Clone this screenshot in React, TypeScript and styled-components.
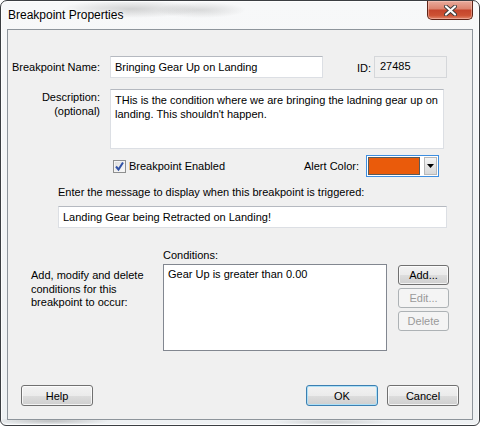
import styled, { createGlobalStyle } from 'styled-components'

const uiFont = `'Liberation Sans', Arial, sans-serif`

const GlobalStyle = createGlobalStyle`
	html, body {
		margin: 0;
		padding: 0;
		background: #ffffff;
	}
	body {
		width: 480px;
		height: 426px;
		overflow: hidden;
		font-family: ${uiFont};
		font-size: 11px;
		color: #000;
	}
`

export default function App() {
	return (
		<>
			<GlobalStyle />
			<Window>
				<TitleBar>
					<Title>Breakpoint Properties</Title>
					<CloseButton>
						<svg width='13' height='11' viewBox='0 0 13 11'>
							<path d='M2 1.5 L11 9.5 M11 1.5 L2 9.5' stroke='#3b3b3b' strokeWidth='4' strokeLinecap='round' />
							<path d='M2 1.5 L11 9.5 M11 1.5 L2 9.5' stroke='#ffffff' strokeWidth='2.2' strokeLinecap='round' />
						</svg>
					</CloseButton>
				</TitleBar>
				<Client>
					<Row>
						<FieldLabel>Breakpoint Name:</FieldLabel>
						<TextBox $width={213}>Bringing Gear Up on Landing</TextBox>
						<IdLabel>ID:</IdLabel>
						<IdBox>27485</IdBox>
					</Row>
					<Row $top={11} $align='flex-start'>
						<FieldLabel $multi>
							Description:
							<br />
							(optional)
						</FieldLabel>
						<TextArea>
							THis is the condition where we are bringing the ladning gear up on
							<br />
							landing. This shouldn't happen.
						</TextArea>
					</Row>
					<Row $top={6}>
						<CheckWrap>
							<CheckBox>
								<svg width='11' height='11' viewBox='0 0 11 11'>
									<path d='M2 5.5 L4.5 8.5 L9 1.5' fill='none' stroke='#3152a6' strokeWidth='2' />
								</svg>
							</CheckBox>
							Breakpoint Enabled
						</CheckWrap>
						<AlertLabel>Alert Color:</AlertLabel>
						<ColorCombo>
							<Swatch $color='#ea5b0b' />
							<DropButton>
								<svg width='7' height='4' viewBox='0 0 7 4'>
									<polygon points='0,0 7,0 3.5,4' fill='#000' />
								</svg>
							</DropButton>
						</ColorCombo>
					</Row>
					<Prompt>Enter the message to display when this breakpoint is triggered:</Prompt>
					<MessageBox>Landing Gear being Retracted on Landing!</MessageBox>
					<Conditions>
						<CondTitle>Conditions:</CondTitle>
						<CondHelp>
							Add, modify and delete
							<br />
							conditions for this
							<br />
							breakpoint to occur:
						</CondHelp>
						<CondList>Gear Up is greater than 0.00</CondList>
						<SideButtons>
							<Button $w={51} $h={20}>Add...</Button>
							<Button $w={51} $h={20} disabled>
								Edit...
							</Button>
							<Button $w={51} $h={20} disabled>
								Delete
							</Button>
						</SideButtons>
					</Conditions>
					<Footer>
						<Button>Help</Button>
						<Spacer />
						<Button $default>OK</Button>
						<Button>Cancel</Button>
					</Footer>
				</Client>
			</Window>
		</>
	)
}

const Window = styled.div`
	box-sizing: border-box;
	width: 480px;
	height: 426px;
	border: 1px solid #3b3e42;
	border-radius: 7px 7px 6px 6px;
	padding: 0 6px 5px 6px;
	display: flex;
	flex-direction: column;
	background:
		radial-gradient(ellipse 70px 9px at 130px 8px, rgba(110, 110, 110, 0.28), transparent),
		radial-gradient(ellipse 45px 8px at 200px 9px, rgba(110, 110, 110, 0.22), transparent),
		radial-gradient(ellipse 60px 4px at 50px 420px, rgba(100, 100, 100, 0.35), transparent),
		radial-gradient(ellipse 60px 3px at 330px 421px, rgba(100, 100, 100, 0.25), transparent),
		linear-gradient(#f7f8f9, #eef1f3);
	box-shadow: inset 0 0 0 1px rgba(255, 255, 255, 0.8);
`
const TitleBar = styled.div`
	height: 28px;
	display: flex;
	align-items: center;
	justify-content: space-between;
`
const Title = styled.div`
	padding-left: 1px;
	font-size: 12px;
	color: #000;
	text-shadow: 0 0 6px #ffffff, 0 0 3px #ffffff;
`
const CloseButton = styled.div`
	align-self: flex-start;
	box-sizing: border-box;
	width: 46px;
	height: 19px;
	border: 1px solid #5e2418;
	border-top: none;
	border-radius: 0 0 5px 5px;
	display: flex;
	align-items: center;
	justify-content: center;
	background: linear-gradient(#e9ab9c 0%, #dd8570 42%, #c5452c 52%, #cd5234 80%, #e2866b 100%);
	box-shadow: inset 0 0 0 1px rgba(255, 210, 200, 0.45);
`
const Client = styled.div`
	flex: 1;
	box-sizing: border-box;
	border: 1px solid #8d949b;
	background: #f0f0f0;
	padding-top: 26px;
	display: flex;
	flex-direction: column;
`
const Row = styled.div<{ $top?: number; $align?: string }>`
	display: flex;
	align-items: ${(p) => p.$align || 'center'};
	margin-top: ${(p) => p.$top || 0}px;
	padding-right: 25px;
`
const FieldLabel = styled.div<{ $multi?: boolean }>`
	width: 92px;
	margin-right: 10px;
	text-align: right;
	line-height: 14px;
	white-space: nowrap;
	padding-top: ${(p) => (p.$multi ? '1px' : '0')};
	flex-shrink: 0;
`
const TextBox = styled.div<{ $width: number }>`
	box-sizing: border-box;
	width: ${(p) => p.$width}px;
	height: 22px;
	padding: 0 4px;
	line-height: 20px;
	background: #ffffff;
	border: 1px solid #dcdfe4;
	border-top-color: #b5b9c0;
	white-space: nowrap;
`
const IdLabel = styled.div`
	flex: 1;
	text-align: right;
	padding-right: 3px;
	padding-top: 2px;
`
const IdBox = styled.div`
	box-sizing: border-box;
	width: 73px;
	height: 22px;
	padding: 0 5px;
	line-height: 18px;
	background: #f0f0f0;
	border: 1px solid #d5d7da;
`
const TextArea = styled.div`
	box-sizing: border-box;
	width: 334px;
	height: 60px;
	padding: 3px 4px;
	line-height: 14px;
	background: #ffffff;
	border: 1px solid #dcdfe4;
	border-top-color: #b5b9c0;
	white-space: nowrap;
`
const CheckWrap = styled.label`
	display: flex;
	align-items: center;
	gap: 3px;
	margin-left: 105px;
`
const CheckBox = styled.span`
	box-sizing: border-box;
	width: 13px;
	height: 13px;
	border: 1px solid #8e8f8f;
	background: linear-gradient(135deg, #dcdcdc, #fbfbfb);
	box-shadow: inset 0 0 0 1px #f4f4f4;
	display: flex;
	align-items: center;
	justify-content: center;
`
const AlertLabel = styled.div`
	flex: 1;
	text-align: right;
	margin-right: 7px;
`
const ColorCombo = styled.div`
	box-sizing: border-box;
	width: 73px;
	height: 22px;
	margin-right: 8px;
	border: 1px solid #3d8ee0;
	background: #ffffff;
	padding: 1px;
	display: flex;
	align-items: stretch;
	gap: 4px;
`
const Swatch = styled.div<{ $color: string }>`
	width: 52px;
	box-sizing: border-box;
	border: 1px solid #5a5a5a;
	background: ${(p) => p.$color};
`
const DropButton = styled.div`
	width: 13px;
	box-sizing: border-box;
	border: 1px solid #b8b8b8;
	background: linear-gradient(#f4f4f4, #d8d8d8);
	display: flex;
	align-items: center;
	justify-content: center;
`
const Prompt = styled.div`
	margin: 8px 0 0 50px;
	line-height: 14px;
`
const MessageBox = styled.div`
	box-sizing: border-box;
	width: 389px;
	height: 22px;
	margin: 7px 0 0 50px;
	padding: 0 4px;
	line-height: 20px;
	background: #ffffff;
	border: 1px solid #dcdfe4;
	border-top-color: #b5b9c0;
`
const Conditions = styled.div`
	margin-top: 20px;
	display: grid;
	grid-template-columns: 144px 224px 51px;
	grid-template-rows: 14px 87px;
	column-gap: 11px;
	row-gap: 2px;
`
const CondTitle = styled.div`
	grid-column: 2;
	line-height: 14px;
`
const CondHelp = styled.div`
	grid-column: 1;
	padding: 5px 0 0 23px;
	line-height: 13.5px;
	white-space: nowrap;
`
const CondList = styled.div`
	box-sizing: border-box;
	padding: 2px 4px;
	line-height: 15px;
	background: #ffffff;
	border: 1px solid #828790;
`
const SideButtons = styled.div`
	padding-top: 1px;
	display: flex;
	flex-direction: column;
	gap: 3px;
`
const Footer = styled.div`
	margin-top: auto;
	padding: 0 13px 13px 13px;
	display: flex;
	gap: 9px;
`
const Spacer = styled.div`
	flex: 1;
`
const Button = styled.button<{ $w?: number; $h?: number; $default?: boolean }>`
	box-sizing: border-box;
	width: ${(p) => p.$w || 72}px;
	height: ${(p) => p.$h || 21}px;
	padding: 0;
	font-family: ${uiFont};
	font-size: 11px;
	color: #000;
	border: 1px solid ${(p) => (p.$default ? '#3c7fb1' : '#707070')};
	border-radius: 3px;
	background: linear-gradient(#f2f2f2 0%, #ebebeb 50%, #dddddd 51%, #cfcfcf 100%);
	box-shadow: inset 0 0 0 1px ${(p) => (p.$default ? '#aee0f7' : 'rgba(255, 255, 255, 0.75)')};
	&:disabled {
		color: #9a9a9a;
		border-color: #adb2b5;
		background: #f4f4f4;
		box-shadow: none;
	}
`
